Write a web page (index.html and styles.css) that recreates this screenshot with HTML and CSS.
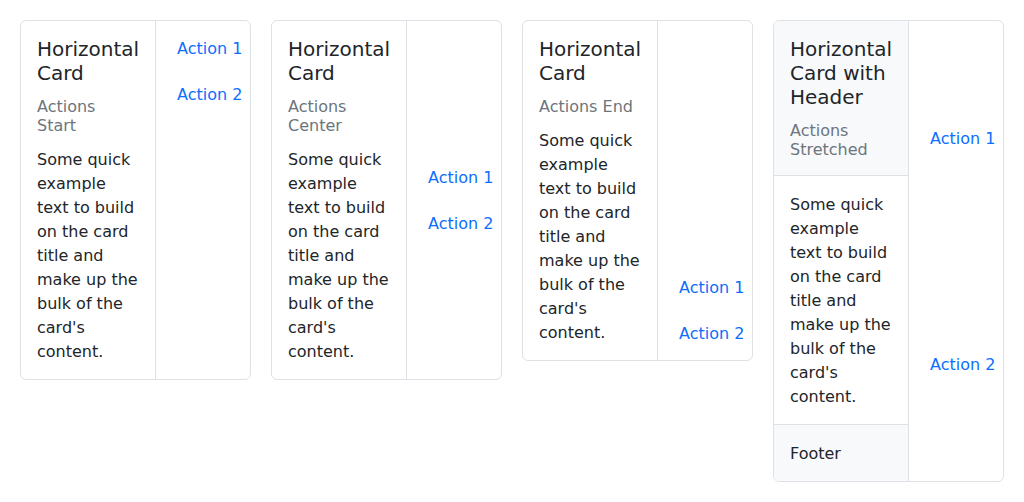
FILE: index.html
```html
<!DOCTYPE html>
<html lang="en">
<head>
<meta charset="utf-8">
<title>Horizontal Cards</title>
<link rel="stylesheet" href="styles.css">
</head>
<body>
<div class="grid">
  <div class="card">
    <div class="main">
      <div class="body">
        <h5 class="title">Horizontal Card</h5>
        <h6 class="subtitle">Actions Start</h6>
        <p class="text">Some quick example text to build on the card title and make up the bulk of the card's content.</p>
      </div>
    </div>
    <div class="actions start">
      <a class="btn" href="#">Action 1</a>
      <a class="btn" href="#">Action 2</a>
    </div>
  </div>

  <div class="card">
    <div class="main">
      <div class="body">
        <h5 class="title">Horizontal Card</h5>
        <h6 class="subtitle">Actions Center</h6>
        <p class="text">Some quick example text to build on the card title and make up the bulk of the card's content.</p>
      </div>
    </div>
    <div class="actions center">
      <a class="btn" href="#">Action 1</a>
      <a class="btn" href="#">Action 2</a>
    </div>
  </div>

  <div class="card">
    <div class="main">
      <div class="body">
        <h5 class="title">Horizontal Card</h5>
        <h6 class="subtitle">Actions End</h6>
        <p class="text">Some quick example text to build on the card title and make up the bulk of the card's content.</p>
      </div>
    </div>
    <div class="actions end">
      <a class="btn" href="#">Action 1</a>
      <a class="btn" href="#">Action 2</a>
    </div>
  </div>

  <div class="card">
    <div class="main">
      <div class="header">
        <h5 class="title">Horizontal Card with Header</h5>
        <h6 class="subtitle last">Actions Stretched</h6>
      </div>
      <div class="body">
        <p class="text">Some quick example text to build on the card title and make up the bulk of the card's content.</p>
      </div>
      <div class="footer">Footer</div>
    </div>
    <div class="actions stretch">
      <a class="btn" href="#">Action 1</a>
      <a class="btn" href="#">Action 2</a>
    </div>
  </div>
</div>
</body>
</html>
```

FILE: styles.css
```css
* { box-sizing: border-box; }

body {
  margin: 0;
  background: #fff;
  color: #212529;
  font-family: "DejaVu Sans", sans-serif;
  font-size: 16px;
  line-height: 1.5;
}

.grid {
  display: grid;
  grid-template-columns: repeat(4, 1fr);
  gap: 20px;
  padding: 20px;
  align-items: start;
}

.card {
  display: flex;
  border: 1px solid #dee2e6;
  border-radius: 6px;
  overflow: hidden;
  background: #fff;
}

.main {
  flex: 1;
  min-width: 0;
  display: flex;
  flex-direction: column;
}

.body {
  padding: 16px 16px 15px;
  flex: 1;
}

.header {
  padding: 16px;
  background: #f8f9fa;
  border-bottom: 1px solid #dee2e6;
}

.footer {
  padding: 17px 16px 15px;
  background: #f8f9fa;
  border-top: 1px solid #dee2e6;
}

.title {
  margin: 0 0 12px;
  font-size: 20px;
  line-height: 1.2;
  font-weight: 400;
  color: #212529;
}

.subtitle {
  margin: 0 0 12px;
  font-size: 16px;
  line-height: 1.2;
  font-weight: 400;
  color: #6c757d;
}

.subtitle.last { margin-bottom: 0; }

.text { margin: 0; padding-top: 1px; }

.actions {
  width: 95px;
  flex: none;
  border-left: 1px solid #dee2e6;
  padding: 9px 8px 8px;
  display: flex;
  flex-direction: column;
  align-items: flex-start;
  gap: 8px;
}

.actions.center { justify-content: center; }
.actions.end { justify-content: flex-end; padding-bottom: 7px; }
.actions.stretch .btn {
  flex: 1;
  display: flex;
  align-items: center;
}

.btn {
  display: block;
  padding: 6px 12px;
  border: 1px solid transparent;
  color: #0d6efd;
  text-decoration: none;
  white-space: nowrap;
  line-height: 24px;
}
```
